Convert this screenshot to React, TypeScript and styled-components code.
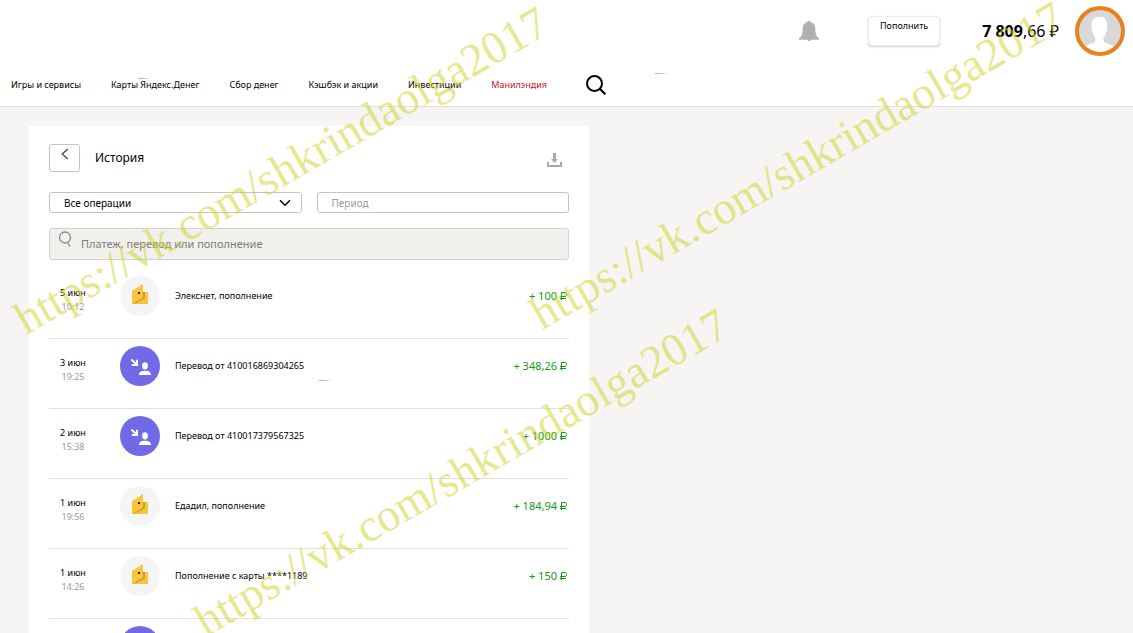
import React from "react";
import styled, { createGlobalStyle } from "styled-components";

const GlobalStyle = createGlobalStyle`
  *, *::before, *::after { box-sizing: border-box; }
  body { margin: 0; background: #f6f5f3; color: #000; font-family: "Noto Sans", sans-serif; font-size: 9px; line-height: 14px; }
  button, input, select { font: inherit; color: inherit; margin: 0; }
  a { color: inherit; text-decoration: none; }
`;

const Page = styled.div`
  position: relative;
  display: flex;
  flex-direction: column;
  height: 100vh;
  overflow: hidden;
`;

const Header = styled.header`
  background: #fff;
  border-bottom: 1px solid #e0e0e0;
`;

const TopBar = styled.div`
  display: flex;
  justify-content: flex-end;
  align-items: center;
  height: 62px;
  padding: 0 8px;
`;

const IconButton = styled.button`
  display: flex;
  padding: 0;
  border: 0;
  background: none;
  cursor: pointer;
`;

const TopUpButton = styled.button`
  display: flex;
  justify-content: center;
  align-items: flex-start;
  width: 72px;
  height: 30px;
  margin: 0 42px 0 49px;
  padding: 2px 0;
  border: 1px solid #ececec;
  border-radius: 4px;
  background: #fff;
  box-shadow: 0 1px 2px rgba(0, 0, 0, 0.2);
  cursor: pointer;
`;

const Balance = styled.a`
  margin-right: 16px;
  font-size: 16px;
  line-height: 24px;
  white-space: nowrap;
`;

const Nav = styled.nav`
  display: flex;
  align-items: center;
  gap: 30px;
  height: 44px;
  padding: 2px 11px 0;
  white-space: nowrap;
`;

const NavLink = styled.a<{ $accent?: boolean }>`
  color: ${(p) => (p.$accent ? "#d81414" : "#000")};
`;

const NavSearch = styled(IconButton)`
  padding: 0 9px;
`;

const Main = styled.main`
  flex: 1;
  min-height: 0;
  padding: 19px 29px 0;
  overflow-y: auto;
  scrollbar-width: none;
`;

const Card = styled.section`
  max-width: 560px;
  padding: 18px 20px;
  background: #fff;
`;

const CardHeader = styled.div`
  display: flex;
  align-items: center;
  gap: 15px;
  padding-right: 7px;
`;

const BackButton = styled.button`
  display: flex;
  justify-content: center;
  align-items: flex-start;
  width: 31px;
  height: 28px;
  padding: 3px 0;
  border: 1px solid #c4c4c4;
  border-radius: 3px;
  background: #fff;
  cursor: pointer;
`;

const Title = styled.h1`
  flex: 1;
  margin: 0;
  font-size: 12px;
  font-weight: 400;
  line-height: 16px;
`;

const DownloadButton = styled(IconButton)`
  padding-top: 4px;
`;

const Filters = styled.div`
  display: grid;
  grid-template-columns: 1fr 1fr;
  gap: 15px;
  margin: 20px 0 15px;
`;

const SelectWrap = styled.div`
  display: grid;
  align-items: center;

  > * { grid-area: 1 / 1; }
  > svg { justify-self: end; margin-right: 11px; pointer-events: none; }
`;

const Select = styled.select`
  appearance: none;
  width: 100%;
  height: 21px;
  padding: 0 14px;
  border: 1px solid #c4c4c4;
  border-radius: 3px;
  background: #fff;
  font-size: 10px;
`;

const PeriodInput = styled.input`
  width: 100%;
  height: 21px;
  padding: 0 14px;
  border: 1px solid #c4c4c4;
  border-radius: 3px;
  background: #fff;
  font-size: 10px;
  &::placeholder { color: #999; opacity: 1; }
`;

const SearchBox = styled.label`
  display: flex;
  gap: 8px;
  height: 32px;
  padding: 0 8px;
  border: 1px solid #d3d3d0;
  border-radius: 3px;
  background: #f1f0ed;

  > svg { flex: none; margin-top: 2px; }
`;

const SearchInput = styled.input`
  flex: 1;
  min-width: 0;
  padding: 0;
  border: 0;
  outline: 0;
  background: none;
  font-size: 11px;
  &::placeholder { color: #7c7c78; opacity: 1; }
`;

const List = styled.ul`
  margin: 9px 0 0;
  padding: 0;
  list-style: none;
`;

const Row = styled.li`
  display: grid;
  grid-template-columns: 71px 40px 1fr auto;
  align-items: center;
  padding: 7px 2px 22px 0;
  border-bottom: 1px solid #e0e0e0;
`;

const When = styled.div`
  width: 48px;
  padding-top: 8px;
  text-align: center;
`;

const Time = styled.div`
  color: #999;
`;

const Badge = styled.div<{ $transfer: boolean }>`
  display: flex;
  width: 40px;
  height: 40px;
  border-radius: 50%;
  background: ${(p) => (p.$transfer ? "#7269e8" : "#f5f5f5")};
`;

const OperationLink = styled.a`
  padding-left: 15px;
`;

const Amount = styled.div`
  display: flex;
  align-items: center;
  gap: 3px;
  color: #139a13;
  font-size: 11px;
  white-space: nowrap;
`;

const Overlay = styled.div`
  position: absolute;
  inset: 0;
  overflow: hidden;
  pointer-events: none;
`;

const Watermark = styled.span<{ $x: number; $y: number }>`
  position: absolute;
  left: ${(p) => p.$x}px;
  top: ${(p) => p.$y}px;
  color: rgba(206, 210, 32, 0.5);
  font-family: "Liberation Serif", serif;
  font-size: 46px;
  line-height: 50px;
  white-space: nowrap;
  transform: rotate(-30deg);
  transform-origin: 0 100%;
`;

const Speck = styled.i<{ $x: number; $y: number }>`
  position: absolute;
  left: ${(p) => p.$x}px;
  top: ${(p) => p.$y}px;
  width: 13px;
  height: 1px;
  background: linear-gradient(90deg, #aaa, #ccc 60%, transparent);
`;

const BellIcon = () => (
  <svg width="20" height="20" viewBox="0 0 20 20" fill="#b0b0b0" aria-hidden="true">
    <path d="M10 0c1 0 1.800.500 2 1.300C14.900 2.100 16.300 4.500 16.300 7.500c0 5 .7 8 3.700 9.800V18.700h-8.200c-.2.800-.8 1.300-1.800 1.300s-1.600-.500-1.800-1.300H0V17.300c3-1.800 3.700-4.800 3.700-9.800 0-3 1.400-5.400 4.300-6.200C8.200.5 9 0 10 0z" />
  </svg>
);

const AvatarIcon = () => (
  <svg width="50" height="50" viewBox="0 0 50 50" aria-hidden="true">
    <circle cx="25" cy="25" r="23" fill="#d8d8d8" />
    <path fill="#fff" d="M8.500 42c2.500-3 6.500-4 9.500-5 2-.8 2.500-2 2.500-5-1.500-1.500-2.300-3.500-2.700-6-1.300-.8-1.500-3-1-4.500-.8-4-.3-8 3.200-9.300l-1-.9c2.500.5 5-.3 6.500-1l-.5 1c2 .2 3-.3 4-.8l-.5 1.300 2.500.2-1.200.8c2.200 2.200 2.700 5.200 2.200 8.700.5 1.500.3 3.700-1 4.500-.4 2.500-1.200 4.500-2.700 6 0 3 .5 4.200 2.500 5 3 1 7 2 9.500 5a23 23 0 0 1-33 0z" />
    <circle cx="25" cy="25" r="23" fill="none" stroke="#e8821e" strokeWidth="4" />
  </svg>
);

const NavSearchIcon = () => (
  <svg width="20" height="20" viewBox="0 0 20 20" fill="none" stroke="#000" strokeWidth="2" aria-hidden="true">
    <circle cx="8.500" cy="8.500" r="7.500" />
    <path d="M13.800 13.800l5.500 5.500" />
  </svg>
);

const BackIcon = () => (
  <svg width="8" height="12" viewBox="0 0 8 12" fill="none" stroke="#555" strokeWidth="1.600" aria-hidden="true">
    <path d="M6.800 1L1.300 6l5.500 5" />
  </svg>
);

const DownloadIcon = () => (
  <svg width="15" height="14" viewBox="0 0 15 14" fill="#a8a8a8" aria-hidden="true">
    <path d="M6 0h3v6h2l-3.500 4L4 6h2zM0 9h2v3h11V9h2v5H0z" />
  </svg>
);

const ChevronIcon = () => (
  <svg width="12" height="8" viewBox="0 0 12 8" fill="none" stroke="#000" strokeWidth="1.500" aria-hidden="true">
    <path d="M1 1.200l5 5 5-5" />
  </svg>
);

const FieldSearchIcon = () => (
  <svg width="15" height="18" viewBox="0 0 15 18" fill="none" stroke="#888" strokeWidth="1.300" aria-hidden="true">
    <circle cx="7" cy="6.500" r="5.500" />
    <path d="M9.500 11.500l2.500 4" />
  </svg>
);

const WalletIcon = () => (
  <svg width="40" height="40" viewBox="0 0 40 40" aria-hidden="true">
    <path fill="#f7c53e" d="M12 28V15L23 8v8h5v12z" />
    <path fill="#cf9c25" d="M13 27.500L23 21.800V16h2v6.500L15 27.500z" />
    <circle cx="19" cy="17" r="1.100" fill="#000" />
  </svg>
);

const TransferIcon = () => (
  <svg width="40" height="40" viewBox="0 0 40 40" fill="#fff" aria-hidden="true">
    <path fill="none" stroke="#fff" strokeWidth="2" d="M11.500 13.500L17 19M17 13.800V19h-5.200" />
    <path d="M25 16.300c1.900 0 2.900 1.500 2.900 3.400s-1 3.900-2.900 3.900-2.900-2-2.900-3.900 1-3.400 2.900-3.400zM19 29c0-3 2.500-4.300 6-4.300s6 1.300 6 4.300z" />
  </svg>
);

const RoubleIcon = () => (
  <svg width="7" height="8" viewBox="0 0 7 8" fill="none" stroke="currentColor" role="img" aria-label="₽">
    <path d="M1.500 8V.5H5c2 0 2 4 0 4H0M0 6.500h6" />
  </svg>
);

const links = ["Игры и сервисы", "Карты Яндекс.Денег", "Сбор денег", "Кэшбэк и акции", "Инвестиции", "Манилэндия"];

const operations = [
  { date: "5 июн", time: "10:12", name: "Элекснет, пополнение", amount: "+ 100", transfer: false },
  { date: "3 июн", time: "19:25", name: "Перевод от 410016869304265", amount: "+ 348,26", transfer: true },
  { date: "2 июн", time: "15:38", name: "Перевод от 410017379567325", amount: "+ 1000", transfer: true },
  { date: "1 июн", time: "19:56", name: "Едадил, пополнение", amount: "+ 184,94", transfer: false },
  { date: "1 июн", time: "14:26", name: "Пополнение с карты ****1189", amount: "+ 150", transfer: false },
];

const watermarks = [
  { x: 31, y: 294 },
  { x: 547, y: 289 },
  { x: 211, y: 596 },
];

const specks = [
  { x: 138, y: 78 },
  { x: 655, y: 73 },
  { x: 319, y: 380 },
];

export default function App() {
  return (
    <Page>
      <GlobalStyle />
      <Header>
        <TopBar>
          <IconButton aria-label="Уведомления"><BellIcon /></IconButton>
          <TopUpButton>Пополнить</TopUpButton>
          <Balance href="#balance"><b>7 809</b>,66 ₽</Balance>
          <IconButton aria-label="Профиль"><AvatarIcon /></IconButton>
        </TopBar>
        <Nav>
          {links.map((text) => (
            <NavLink key={text} href="#" $accent={text === "Манилэндия"}>{text}</NavLink>
          ))}
          <NavSearch aria-label="Поиск"><NavSearchIcon /></NavSearch>
        </Nav>
      </Header>
      <Main>
        <Card>
          <CardHeader>
            <BackButton aria-label="Назад"><BackIcon /></BackButton>
            <Title>История</Title>
            <DownloadButton aria-label="Скачать"><DownloadIcon /></DownloadButton>
          </CardHeader>
          <Filters>
            <SelectWrap>
              <Select aria-label="Операции"><option>Все операции</option></Select>
              <ChevronIcon />
            </SelectWrap>
            <PeriodInput aria-label="Период" placeholder="Период" />
          </Filters>
          <SearchBox>
            <FieldSearchIcon />
            <SearchInput aria-label="Поиск операций" placeholder="Платеж, перевод или пополнение" />
          </SearchBox>
          <List>
            {operations.map((op) => (
              <Row key={op.date + op.time}>
                <When>
                  <div>{op.date}</div>
                  <Time>{op.time}</Time>
                </When>
                <Badge $transfer={op.transfer}>{op.transfer ? <TransferIcon /> : <WalletIcon />}</Badge>
                <OperationLink href="#">{op.name}</OperationLink>
                <Amount>{op.amount}<RoubleIcon /></Amount>
              </Row>
            ))}
            <Row>
              <When />
              <Badge $transfer><TransferIcon /></Badge>
            </Row>
          </List>
        </Card>
      </Main>
      <Overlay aria-hidden="true">
        {specks.map((s) => <Speck key={s.x} $x={s.x} $y={s.y} />)}
        {watermarks.map((w) => (
          <Watermark key={w.x} $x={w.x} $y={w.y}>https://vk.com/shkrindaolga2017</Watermark>
        ))}
      </Overlay>
    </Page>
  );
}
